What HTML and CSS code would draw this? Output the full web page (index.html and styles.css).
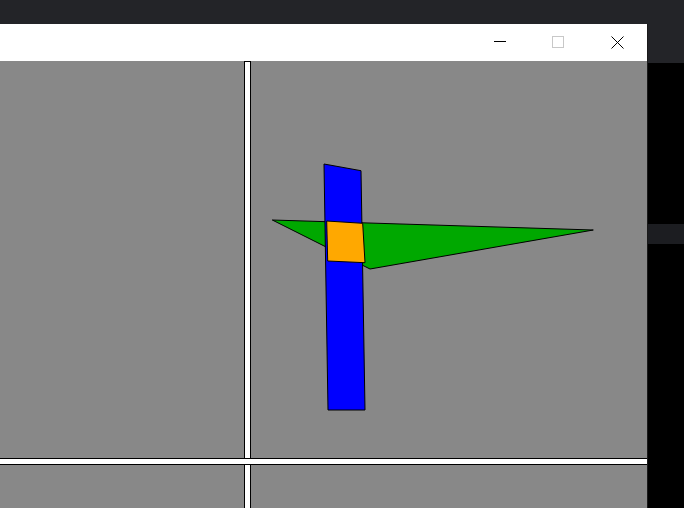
FILE: index.html
```html
<!DOCTYPE html>
<html>
<head>
<meta charset="utf-8">
<link rel="stylesheet" href="styles.css">
</head>
<body>
<div class="topbar"></div>
<div class="main">
  <div class="window">
    <div class="titlebar">
      <div class="ctl ctl-min">
        <svg width="13" height="13" viewBox="0 0 13 13"><path d="M0 5.5H12" stroke="#000" stroke-width="1"/></svg>
      </div>
      <div class="ctl ctl-max">
        <svg width="13" height="13" viewBox="0 0 13 13"><rect x="0.5" y="0.5" width="11" height="11" fill="none" stroke="#c8c8c8" stroke-width="1"/></svg>
      </div>
      <div class="ctl ctl-close">
        <svg width="13" height="13" viewBox="0 0 13 13"><path d="M0.5 0.5L12.5 12.5M12.5 0.5L0.5 12.5" stroke="#000" stroke-width="1"/></svg>
      </div>
    </div>
    <div class="canvas">
      <div class="pane"></div>
      <div class="vsep vsep-top"></div>
      <div class="pane diagram">
        <svg class="shapes" width="396" height="397" viewBox="0 0 396 397">
          <polygon points="21.3,159 342.3,169 119,208" fill="#00a800" stroke="#000" stroke-width="1"/>
          <polygon points="73,103 110,109.7 114,349 77,349" fill="#0000ff" stroke="#000" stroke-width="1"/>
          <polygon points="75.7,160 111.7,162.3 114,201.7 76.7,200" fill="#ffa800" stroke="#000" stroke-width="1"/>
        </svg>
      </div>
      <div class="hsep"></div>
      <div class="pane"></div>
      <div class="vsep"></div>
      <div class="pane"></div>
    </div>
  </div>
  <div class="side">
    <div class="side-top"></div>
    <div class="side-gap1"></div>
    <div class="side-strip"></div>
  </div>
</div>
</body>
</html>
```

FILE: styles.css
```css
html, body {
  margin: 0;
  padding: 0;
}
body {
  width: 684px;
  height: 508px;
  overflow: hidden;
  background: #000;
  font-family: "Liberation Sans", Arial, sans-serif;
}
.topbar {
  height: 24px;
  background: #232428;
}
.main {
  display: flex;
  height: 484px;
}
.window {
  width: 647px;
  display: flex;
  flex-direction: column;
  background: #888888;
}
.titlebar {
  height: 37px;
  background: #fff;
  display: flex;
  justify-content: flex-end;
  align-items: center;
  padding-right: 23px;
  box-sizing: border-box;
}
.ctl {
  width: 13px;
  height: 13px;
}
.ctl svg {
  display: block;
}
.ctl-max {
  margin-left: 45px;
}
.ctl-close {
  margin-left: 46px;
}
.canvas {
  flex: 1;
  display: grid;
  grid-template-columns: 244px 7px 1fr;
  grid-template-rows: 397px 7px 1fr;
  background: #888888;
}
.pane {
  background: #888888;
}
.diagram {
  position: relative;
}
.shapes {
  position: absolute;
  left: 0;
  top: 0;
  display: block;
}
.vsep {
  background: #fff;
  border-left: 1px solid #000;
  border-right: 1px solid #000;
  box-sizing: border-box;
}
.vsep-top {
  border-top: 1px solid #000;
}
.hsep {
  grid-column: 1 / 4;
  background: #fff;
  border-top: 1px solid #000;
  border-bottom: 1px solid #000;
  box-sizing: border-box;
}
.side {
  flex: 1;
  display: flex;
  flex-direction: column;
  border-left: 1px solid #1a1a1a;
}
.side-top {
  height: 39px;
  background: #232428;
}
.side-gap1 {
  height: 161px;
  background: #000;
}
.side-strip {
  height: 20px;
  background: #1c1d21;
}
```
